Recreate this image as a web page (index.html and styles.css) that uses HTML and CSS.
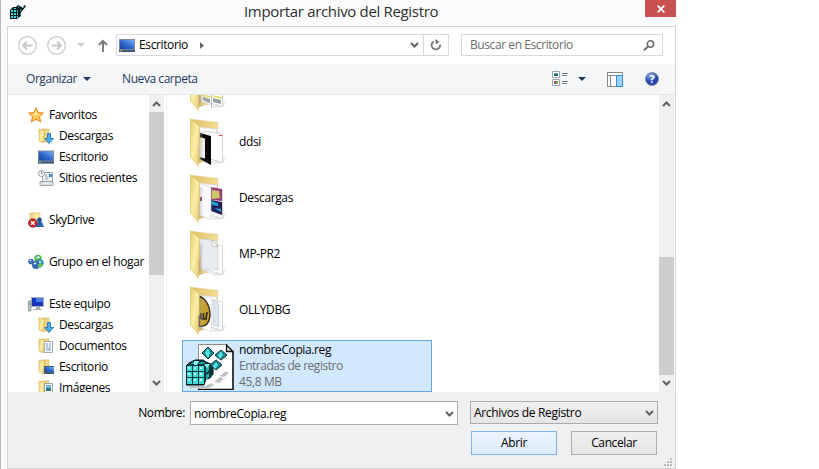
FILE: index.html
```html
<!DOCTYPE html>
<html lang="es">
<head>
<meta charset="utf-8">
<title>Importar archivo del Registro</title>
<link rel="stylesheet" href="styles.css">
</head>
<body>
<svg class="defs" width="0" height="0">
  <defs>
    <linearGradient id="gold" x1="0" x2="1" y1="0" y2="1"><stop offset="0" stop-color="#e8cc72"/><stop offset=".5" stop-color="#fcefa9"/><stop offset="1" stop-color="#e9ca6c"/></linearGradient>
    <linearGradient id="back" x1="0" x2="1"><stop offset="0" stop-color="#dfc065"/><stop offset="1" stop-color="#f4df95"/></linearGradient>
    <linearGradient id="blue" x1="0" x2="1" y1="1" y2="0"><stop offset="0" stop-color="#17449c"/><stop offset=".5" stop-color="#2f6bd0"/><stop offset="1" stop-color="#7bb2f2"/></linearGradient>
    <linearGradient id="shade" x1="0" x2="1"><stop offset="0" stop-color="#888" stop-opacity=".5"/><stop offset="1" stop-color="#ccc" stop-opacity="0"/></linearGradient>
    <radialGradient id="help" cx=".4" cy=".25"><stop offset="0" stop-color="#8fb0ef"/><stop offset="1" stop-color="#2440ad"/></radialGradient>
    <symbol id="chev" viewBox="0 0 9 6"><path d="M1 1l3.500 3.500L8 1" fill="none" stroke="#606060" stroke-width="2"/></symbol>
    <symbol id="desk" viewBox="0 0 16 13"><path d="M0 0h16v13H0z" fill="#7d8a9b"/><path d="M1 1h14v9H1z" fill="url(#blue)"/><path d="M0 11h16v2H0z" fill="#40597b"/><path d="M1 11h2v1H1z" fill="#9fc46a"/></symbol>
    <symbol id="fold" viewBox="0 0 16 16"><path d="M4 1h7v13H4z" fill="url(#back)" stroke="#d3b45c" stroke-width=".6"/><path d="M1 1l5 1v13l-5-2z" fill="url(#gold)" stroke="#d9b95d" stroke-width=".7"/></symbol>
    <symbol id="down" viewBox="0 0 16 16"><use href="#fold"/><path d="M9.500 5.500h3v5H15.500L11 15.500 6.800 10.500H9.500z" fill="#4ab0ee" stroke="#1f73b8" stroke-width=".9"/></symbol>
    <symbol id="docs" viewBox="0 0 16 16"><use href="#fold"/><path d="M6.500 3.500h8v11h-8z" fill="#fafcff" stroke="#a4acb5"/><path d="M8 6h2M11 6h2M8 8h2M11 8h2M8 10h5M8 12h5" stroke="#7797bd"/></symbol>
    <symbol id="dfold" viewBox="0 0 16 16"><use href="#fold"/><path d="M6 7h10v8H6z" fill="#465e7b"/><path d="M7 8h9v5H7z" fill="url(#blue)"/></symbol>
    <symbol id="pics" viewBox="0 0 16 16"><use href="#fold"/><path d="M6.500 3.500h8v11h-8z" fill="#fff" stroke="#9aa3ae"/><path d="M8 5h5v3H8z" fill="#69b4e6"/><path d="M8 8h5v3H8z" fill="#2f7378"/></symbol>
    <symbol id="star" viewBox="0 0 16 16"><path d="M8 .8l2.200 4.800 5.200.5-3.900 3.600 1.200 5.300L8 12.300 3.300 15l1.200-5.300L.6 6.100l5.200-.5z" fill="#ffc64d" stroke="#e88325" stroke-linejoin="round"/><path d="M8 3l1.300 3.500 3 .4L5 9z" fill="#ffeaa5"/></symbol>
    <symbol id="recent" viewBox="0 0 16 16"><path d="M4.500 2.500h10v9h-10z" fill="#f4f7f9" stroke="#9ba4ac"/><path d="M7 5h2M7 7h3M7 9h3" stroke="#8a9dad"/><path d="M11 4h3v3h-3z" fill="#3b94da"/><path d="M2 11.500h13v4H2z" fill="#dadddf" stroke="#858b91" stroke-width=".7"/><path d="M5 13h7" stroke="#fff"/><circle cx="3.500" cy="3.500" r="3" fill="#fff" stroke="#8c969e"/><path d="M3.500 1.500v2h1.500" fill="none" stroke="#606970" stroke-width=".8"/></symbol>
    <symbol id="sky" viewBox="0 0 16 16"><path d="M2 1h10v11H2z" fill="url(#gold)" stroke="#dbbd65" stroke-width=".6"/><circle cx="11.500" cy="8" r="2.400" fill="#20549e"/><path d="M7 15l3-5h4l2 5z" fill="#2764b6"/><circle cx="4.800" cy="11" r="4.300" fill="#c9252b" stroke="#8e151b" stroke-width=".7"/><path d="M3 9.200l3.600 3.600m0-3.600L3 12.800" stroke="#fff" stroke-width="1.500"/></symbol>
    <symbol id="group" viewBox="0 0 16 16"><circle cx="3" cy="7.500" r="2.800" fill="#3b67b5"/><circle cx="10" cy="4.500" r="3.700" fill="#51b55a"/><circle cx="12" cy="9" r="3.700" fill="#2c9ab5"/><circle cx="8" cy="11" r="4" fill="#3568bb"/><circle cx="12" cy="11.500" r="2.200" fill="#67c259"/><path d="M8.500 4l2-1 1 1M2 7l1-1M6 10l2-1M11 8h2" stroke="#dff6ff" fill="none" stroke-width="1.600"/></symbol>
    <symbol id="pc" viewBox="0 0 16 16"><path d="M3.500 1.500h12v9h-12z" fill="#1536b8" stroke="#a7adb5"/><path d="M8 2h7v4H8z" fill="#4e7ceb"/><path d="M8 11h4v2H8zM5 13h9v1H5z" fill="#abb2b9"/><path d="M.5 5h2.500v10H.5z" fill="#c3c7cb" stroke="#788189" stroke-width=".7"/><path d="M1 7h1v2H1z" fill="#4cb54b"/></symbol>
    <symbol id="fback" viewBox="0 0 40 50"><path d="M2 2.500L27.500 5.500V40L8 46z" fill="url(#back)" stroke="#dfc575" stroke-width=".6"/></symbol>
    <symbol id="fpages" viewBox="0 0 40 50"><path d="M22 41l15-1-4 6-9 1z" fill="#999" opacity=".2"/><path d="M9 10l18 2v34L12 41z" fill="#fbfbfb" stroke="#ccc" stroke-width=".6"/><path d="M14 14l18.500 3v28.500l-18-5z" fill="#fff" stroke="#c5c5c5" stroke-width=".7"/></symbol>
    <symbol id="ffront" viewBox="0 0 40 50"><path d="M9 14l5 1v30l-5 1z" fill="url(#shade)"/><path d="M.5 1.500L9.300 9v21l-1 1v18L.5 40z" fill="url(#gold)" stroke="#dfc068" stroke-width=".7"/></symbol>
    <symbol id="cubes" viewBox="0 0 48 48">
      <path d="M13 2h28l6 8v38H13z" fill="#fff"/><path d="M12.500 48V2.500h29" fill="none" stroke="#8c8c8c"/><path d="M47 9v38.500H12" fill="none" stroke="#111" stroke-width="1.600"/><path d="M40.500 3v6.500H47z" fill="#ddd" stroke="#111" stroke-width="1.300"/>
      <path d="M28 40l6-5 4 2-5 4zM33 34l4-2 1-2h4v2l-4 3zM3 44h16l7-3 2 2-5 3H4z" fill="#bfc3c4"/>
      <path d="M0 24l3-3 6-3h8l3 2 7 3v9l-3 4-4 1-2 6H0z" fill="#04393c" stroke="#021315"/>
      <path d="M1 24h5v5H1zm6 0h5v5H7zm6 0h5v5h-5zM1 30h5v5H1zm6 0h5v5H7zm6 0h5v5h-5zM1 36h5v6H1zm6 0h5v6H7zm6 0h5v6h-5z" fill="#3bdcda"/>
      <path d="M2 26h2M8 26h2M14 26h2M2 32h2M8 32h2M14 32h2M2 38h2M8 38h2M14 38h2" stroke="#c0ffff" stroke-width="2"/>
      <path d="M4 22l3-2h4l-2 2zm8 0l3-2h4l-2 2zM20 25l3-2v5l-3 3zM20 33l3-2v4l-3 3z" fill="#22abad"/><path d="M8 19h5l-2 4H8zM18 22h6l-3 4z" fill="#8df6f3"/>
      <path d="M22 5l6 6-6 6-6-6zM35 8l6 5-6 5-6-5zM30 18l6 5-6 5-6-5z" fill="#148a91" stroke="#07383b"/><path d="M22 6l2 5-2 5-3-5zM35 9l2 4-3 4-2-4zM30 20l2 3-3 4-2-3z" fill="#58e4e2"/>
    </symbol>
    <symbol id="minicubes" viewBox="0 0 16 16"><path d="M0 6l3-3h3l2-2 2 1 3 2 1-3 2 1-3 4-2 2v4l-4 3H0z" fill="#031b1d"/><path d="M1 6h2v2H1zm3 0h2v2H4zm3 0h1v2H7zM1 9h2v2H1zm3 0h2v2H4zm3 0h1v2H7zM1 12h2v2H1zm3 0h2v2H4zm3 0h1v2H7z" fill="#35dada"/><path d="M8 2l1 1-1 1zM10 5l1 1-1 2zM13 2l1 0-1 2zM4 4h2v1H4zM11 9v2h-1z" fill="#47d6d6"/></symbol>
  </defs>
</svg>

<div class="window">
  <header class="titlebar">
    <svg class="appicon" width="16" height="16"><use href="#minicubes"/></svg>
    <h1>Importar archivo del Registro</h1>
    <button class="close" aria-label="Cerrar"><svg width="8" height="8" viewBox="0 0 8 8"><path d="M.7.7l6.600 6.600m0-6.600L.7 7.300" stroke="#fff" stroke-width="1.700"/></svg></button>
  </header>

  <div class="client">
    <nav class="navbar">
      <svg class="circle" width="19" height="19" viewBox="0 0 19 19" fill="none" stroke="#c8c8c8"><circle cx="9.500" cy="9.500" r="8.800" stroke-width="1.200"/><path d="M14.500 9.500H5.500M9 5.500l-4 4 4 4" stroke-width="1.900"/></svg>
      <svg class="circle fwd" width="19" height="19" viewBox="0 0 19 19" fill="none" stroke="#c8c8c8"><circle cx="9.500" cy="9.500" r="8.800" stroke-width="1.200"/><path d="M4.500 9.500h9M10 5.500l4 4-4 4" stroke-width="1.900"/></svg>
      <svg class="hist" width="8" height="4" viewBox="0 0 8 4"><path d="M0 0h8L4 4z" fill="#ccc"/></svg>
      <svg class="up" width="10" height="13" viewBox="0 0 10 13"><path d="M5 13V2M1 6l4-4 4 4" fill="none" stroke="#7c7c7c" stroke-width="2"/></svg>
      <div class="address">
        <svg width="16" height="13"><use href="#desk"/></svg>
        <span class="crumb">Escritorio</span>
        <svg width="4" height="7" viewBox="0 0 4 7"><path d="M0 0v7l4-3.500z" fill="#666"/></svg>
        <svg class="drop" width="9" height="6"><use href="#chev"/></svg>
        <span class="refresh"><svg width="12" height="12" viewBox="0 0 12 12"><path d="M3.800 2.500A4.200 4.200 0 1 0 10 5.500" fill="none" stroke="#7a7a7a" stroke-width="1.800"/><path d="M5 0l4.500 2.700L6 5.500z" fill="#7a7a7a"/></svg></span>
      </div>
      <div class="search"><span>Buscar en Escritorio</span><svg width="12" height="11" viewBox="0 0 12 11" fill="none" stroke="#717171"><circle cx="7.500" cy="4" r="3.200" stroke-width="1.600"/><path d="M5 6.500L1 10.300" stroke-width="2"/></svg></div>
    </nav>

    <div class="toolbar">
      <span class="organize">Organizar</span>
      <svg width="8" height="4" viewBox="0 0 8 4"><path d="M0 0h8L4 4z" fill="#1e3962"/></svg>
      <span class="newfolder">Nueva carpeta</span>
      <svg class="view" width="16" height="16" viewBox="0 0 16 16"><path d="M.5.500h7v6h-7zM.5 8.500h7v6h-7z" fill="#fff" stroke="#9aa5ae"/><path d="M2 2h4v1H2z" fill="#5aa7d8"/><path d="M2 3h4v2H2z" fill="#27666a"/><path d="M2 10h2v2H2z" fill="#d53e31"/><path d="M4 10h2v2H4z" fill="#4bae36"/><path d="M2 12h2v1H2z" fill="#355ec5"/><path d="M4 12h2v1H4z" fill="#e0b72c"/><path d="M10 2.500h6M10 4.500h5M10 10.500h6M10 12.500h5" stroke="#77818b"/></svg>
      <svg class="viewdrop" width="8" height="4" viewBox="0 0 8 4"><path d="M0 0h8L4 4z" fill="#1e3962"/></svg>
      <svg class="pane" width="16" height="15" viewBox="0 0 16 15"><path d="M.5.500h15v14H.5z" fill="#fff" stroke="#868686"/><path d="M0 3.500h16M3.500 4v11" stroke="#868686"/><path d="M9.500 3.500h6v11h-6z" fill="#9bd1fb" stroke="#2e91df"/></svg>
      <div class="help"><svg width="14" height="14" viewBox="0 0 14 14"><circle cx="7" cy="7" r="6.500" fill="url(#help)" stroke="#8792ae"/></svg><b>?</b></div>
    </div>

    <div class="content">
      <aside class="sidebar">
        <ul class="tree">
          <li><svg><use href="#star"/></svg><span>Favoritos</span></li>
          <li class="sub"><svg><use href="#down"/></svg><span>Descargas</span></li>
          <li class="sub"><svg><use href="#desk"/></svg><span>Escritorio</span></li>
          <li class="sub"><svg><use href="#recent"/></svg><span>Sitios recientes</span></li>
          <li class="gap"><svg><use href="#sky"/></svg><span>SkyDrive</span></li>
          <li class="gap"><svg><use href="#group"/></svg><span>Grupo en el hogar</span></li>
          <li class="gap"><svg><use href="#pc"/></svg><span>Este equipo</span></li>
          <li class="sub"><svg><use href="#down"/></svg><span>Descargas</span></li>
          <li class="sub"><svg><use href="#docs"/></svg><span>Documentos</span></li>
          <li class="sub"><svg><use href="#dfold"/></svg><span>Escritorio</span></li>
          <li class="sub"><svg><use href="#pics"/></svg><span>Imágenes</span></li>
        </ul>
        <div class="scroll"><svg class="flip" width="9" height="6"><use href="#chev"/></svg><i class="thumb side"></i><svg width="9" height="6"><use href="#chev"/></svg></div>
      </aside>
      <main class="files">
        <ul class="list">
          <li><svg class="big" viewBox="0 0 40 50"><use href="#fback"/><use href="#fpages"/><path d="M13 36l7 2v4l-7-3zM23 37l8 2v4l-8-2z" fill="#9aa1a5"/><path d="M12 34l8 2M23 35l9 2" stroke="#e4dd51" stroke-width="1.500"/><path d="M21.500 14v33" stroke="#bbb"/><use href="#ffront"/></svg></li>
          <li><svg class="big" viewBox="0 0 40 50"><use href="#fback"/><use href="#fpages"/><path d="M10 16l11 3v29l-11-6z" fill="#080808"/><path d="M9 20l6 1.500v20L9 40z" fill="#f3eee4"/><path d="M29 18h3v1h-3z" fill="#d44"/><use href="#ffront"/></svg><span>ddsi</span></li>
          <li><svg class="big" viewBox="0 0 40 50"><use href="#fback"/><use href="#fpages"/><path d="M21 14l11 2v12l-11-1z" fill="#9d3d7a"/><path d="M22 17l7 1 1 7-8 1z" fill="#cbc967"/><path d="M21 27l11 2v13l-11-4z" fill="#251f60"/><path d="M21 28l7 2v3l-6-1zM24 35l7 1v3z" fill="#20a4c4"/><path d="M9 10l12 4v33l-12-5z" fill="#fafafa" stroke="#ccc" stroke-width=".6"/><path d="M10 24h2v4h-2z" fill="#7a4766"/><use href="#ffront"/></svg><span>Descargas</span></li>
          <li><svg class="big" viewBox="0 0 40 50"><use href="#fback"/><use href="#fpages"/><path d="M11 10l12 1 5 7v23l-17-1z" fill="#e8ebf0" stroke="#c5c8cd" stroke-width=".6"/><path d="M22 11l6 7-6-1z" fill="#fff" stroke="#aaa" stroke-width=".6"/><use href="#ffront"/></svg><span>MP-PR2</span></li>
          <li><svg class="big" viewBox="0 0 40 50"><use href="#fback"/><use href="#fpages"/><path d="M23 14l6 5v23l-6-2z" fill="#dde4ed" stroke="#c1c4c9" stroke-width=".6"/><path d="M9 10l12.500 4v33L9 42z" fill="#fff" stroke="#ccc" stroke-width=".6"/><path d="M9 11c7 3 11 10 11 18 0 8-4 14-11 12z" fill="#c5a029" stroke="#373226" stroke-width="1.500"/><path d="M17 27l-1 7h-5M13.500 28v6M11 28v6" fill="none" stroke="#2c291e" stroke-width="1.700"/><use href="#ffront"/></svg><span>OLLYDBG</span></li>
          <li class="selected"><svg class="reg" viewBox="0 0 48 48"><use href="#cubes"/></svg><div class="meta"><span class="name">nombreCopia.reg</span><span class="type">Entradas de registro</span><span class="size">45,8 MB</span></div></li>
        </ul>
        <div class="scroll"><svg class="flip" width="9" height="6"><use href="#chev"/></svg><i class="thumb main"></i><svg width="9" height="6"><use href="#chev"/></svg></div>
      </main>
    </div>

    <footer class="footer">
      <div class="row">
        <label>Nombre:</label>
        <div class="field"><span class="value">nombreCopia.reg</span><svg width="9" height="6"><use href="#chev"/></svg></div>
        <div class="filter"><span>Archivos de Registro</span><svg width="9" height="6"><use href="#chev"/></svg></div>
      </div>
      <div class="buttons"><button class="btn primary">Abrir</button><button class="btn">Cancelar</button></div>
      <svg class="grip" width="8" height="8" viewBox="0 0 8 8"><path d="M6 0h2v2H6zM3 3h2v2H3zM6 3h2v2H6zM0 6h2v2H0zM3 6h2v2H3zM6 6h2v2H6z" fill="#bbb"/></svg>
    </footer>
  </div>
</div>
</body>
</html>
```

FILE: styles.css
```css
* { box-sizing: border-box; }
body { margin: 0; background: #fff; font: 12px/16px "Open Sans", "Noto Sans", sans-serif; color: #000; letter-spacing: -.38px; overflow: hidden; }
svg { display: block; flex: none; }
.defs { position: absolute; }
ul { list-style: none; margin: 0; padding: 0; }
span, h1, label { white-space: nowrap; }
button { font: inherit; letter-spacing: inherit; padding: 0; }

.window { width: 676px; height: 469px; background: #fbfbfb; border-left: 1px solid #b9b9b9; padding-left: 6px; }
.titlebar { height: 26px; display: flex; align-items: flex-start; }
.appicon { margin: 4px 0 0 3px; }
h1 { flex: 1; margin: 0 0 0 218px; font-size: 15px; line-height: 22px; font-weight: 400; color: #303030; letter-spacing: -.33px; }
.close { width: 31px; height: 17px; border: 0; background: #c75050; display: flex; align-items: center; justify-content: center; }

.client { height: 443px; border: 1px solid #d4d4d4; display: flex; flex-direction: column; }
.navbar { height: 37px; background: #fff; display: flex; align-items: center; padding: 0 12px 1px 10px; }
.fwd { margin-left: 10px; }
.hist { margin-left: 11px; }
.up { margin-left: 13px; }
.address { width: 333px; height: 22px; margin-left: 8px; border: 1px solid #d9d9d9; display: flex; align-items: center; padding-left: 2px; }
.crumb { margin: 0 12px 0 4px; }
.drop { margin-left: auto; margin-right: 4px; }
.refresh { width: 25px; height: 20px; border-left: 1px solid #d9d9d9; display: flex; align-items: center; justify-content: center; }
.search { width: 202px; height: 22px; margin-left: auto; border: 1px solid #d9d9d9; display: flex; align-items: center; justify-content: space-between; padding: 0 7px 0 8px; color: #6d6d6d; letter-spacing: -.42px; }

.toolbar { height: 31px; background: #f5f6f7; border-bottom: 1px solid #e5e6e8; display: flex; align-items: center; padding: 0 16px 0 18px; color: #1e3962; letter-spacing: -.44px; }
.organize { margin-right: 6px; }
.newfolder { margin-left: 31px; }
.view { margin-left: auto; }
.viewdrop { margin-left: 10px; }
.pane { margin-left: 21px; }
.help { position: relative; width: 14px; height: 14px; margin-left: 22px; }
.help b { position: absolute; inset: 0; font-size: 11px; line-height: 14px; text-align: center; color: #fff; letter-spacing: 0; }

.content { height: 297px; display: flex; overflow: hidden; background: #fff; }
.sidebar { width: 159px; display: flex; justify-content: space-between; padding-right: 2px; border-right: 1px solid #f2f2f2; }
.tree { width: 141px; height: 297px; overflow: hidden; padding: 9px 0 0 20px; }
.tree li { height: 21px; display: flex; align-items: center; }
.tree svg { width: 16px; height: 16px; margin-right: 5px; }
.tree .sub { padding-left: 10px; }
.tree .gap { margin-top: 21px; }

.scroll { width: 15px; height: 297px; flex: none; background: #f0f0f0; display: flex; flex-direction: column; align-items: center; padding: 6px 0; }
.flip { transform: rotate(180deg); }
.thumb { width: 15px; background: #cdcdcd; }
.side { height: 163px; margin: 5px 0 auto; }
.main { height: 118px; margin: auto 0 5px; }

.files { flex: 1; height: 297px; display: flex; justify-content: space-between; padding-right: 1px; }
.list { width: 265px; margin-top: -35px; padding-left: 15px; }
.list li { width: 250px; height: 52px; margin-bottom: 4px; border: 1px solid transparent; display: flex; align-items: center; }
.big { width: 40px; height: 50px; margin: 0 9px 0 7px; }
.list .selected { background: #d1e8ff; border-color: #66a7e8; }
.reg { width: 48px; height: 48px; margin: 0 5px 0 3px; }
.meta { display: flex; flex-direction: column; }
.type, .size { color: #6d6d6d; }
.type { letter-spacing: -.48px; }

.footer { position: relative; flex: 1; background: #f0f0f0; padding-top: 9px; }
.row { display: flex; align-items: flex-start; }
label { width: 182px; padding-right: 5px; text-align: right; line-height: 24px; }
.field { width: 268px; height: 24px; background: #fff; border: 1px solid #abadb3; display: flex; align-items: center; justify-content: space-between; padding: 2px 3px 0 3px; }
.filter { width: 188px; height: 23px; margin-left: 12px; border: 1px solid #acacac; background: linear-gradient(#f0f0f0, #e5e5e5); display: flex; align-items: center; justify-content: space-between; padding: 0 3px; }
.filter span { letter-spacing: -.32px; }
.buttons { display: flex; gap: 14px; margin: 6px 0 0 463px; }
.btn { width: 86px; height: 24px; border: 1px solid #acacac; background: linear-gradient(#f0f0f0, #e5e5e5); color: #000; }
.primary { border-color: #7eb4ea; background: linear-gradient(#ecf4fc, #dcecfc); }
.grip { position: absolute; right: 3px; bottom: 2px; }
```
